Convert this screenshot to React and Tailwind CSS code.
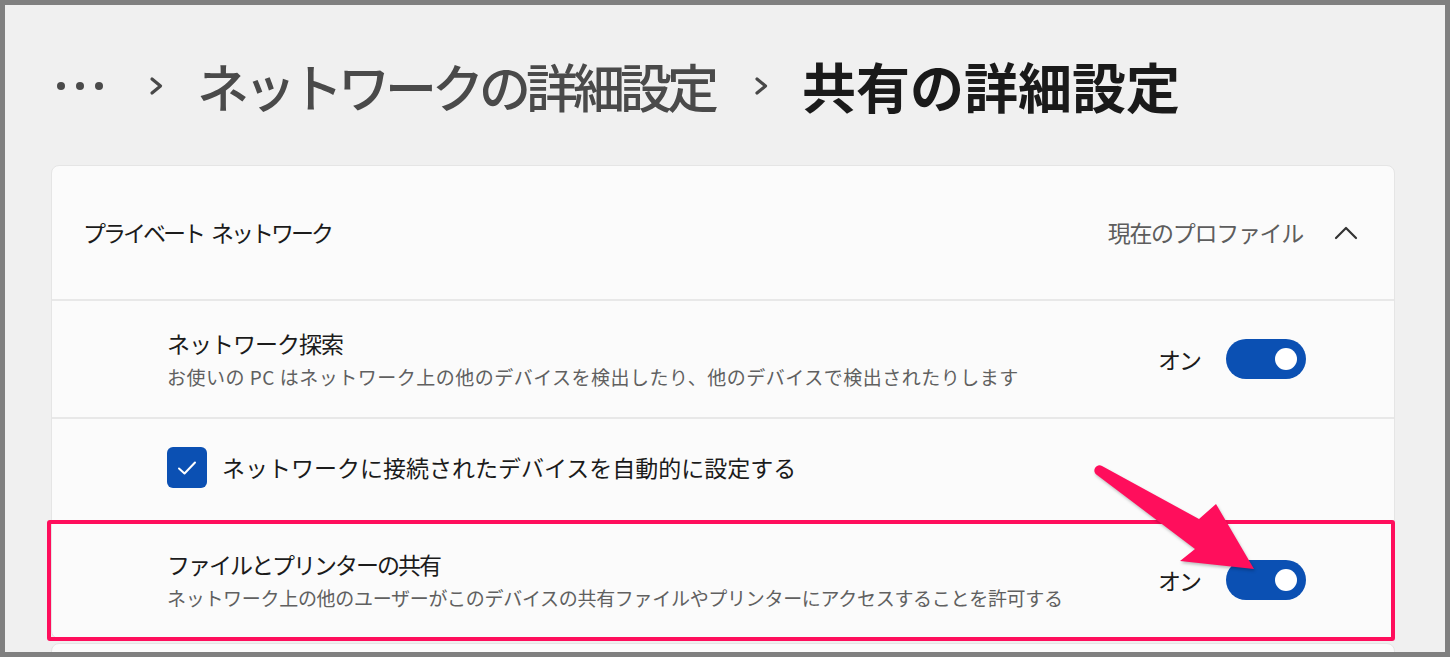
import React from 'react'

function Toggle() {
  return (
    <div className="flex items-center gap-[26px]">
      <span className="text-[23px] tracking-[-2px] text-[#1b1b1b] leading-none">オン</span>
      <div className="w-[80px] h-[40px] rounded-full bg-[#0b50b3] flex items-center justify-end pr-[9px]">
        <div className="w-[22px] h-[22px] rounded-full bg-white" />
      </div>
    </div>
  )
}

function Chevron({ className }) {
  return (
    <svg className={className} viewBox="0 0 14 20" fill="none" stroke="#484848" strokeWidth="3.2" strokeLinecap="round" strokeLinejoin="round">
      <path d="M3 3 L11.5 10 L3 17" />
    </svg>
  )
}

export default function App() {
  return (
    <div className="relative w-[1450px] h-[657px] overflow-hidden border-[5px] border-[#808080] bg-[#f0f0f0] font-['Noto_Sans_CJK_JP',sans-serif]">
      {/* breadcrumb */}
      <div className="flex items-center h-[80px] mt-[41px] pl-[52px]">
        <div className="flex items-center gap-[11px]">
          <div className="w-[8px] h-[8px] rounded-full bg-[#4a4a4a]" />
          <div className="w-[8px] h-[8px] rounded-full bg-[#4a4a4a]" />
          <div className="w-[8px] h-[8px] rounded-full bg-[#4a4a4a]" />
        </div>
        <Chevron className="w-[14px] h-[20px] ml-[46px]" />
        <span className="ml-[34px] text-[52px] font-medium tracking-[-5px] text-[#4a4a4a] leading-none">ネットワークの詳細設定</span>
        <Chevron className="w-[14px] h-[20px] ml-[40px]" />
        <span className="ml-[34px] text-[54px] font-bold text-[#1a1a1a] leading-none">共有の詳細設定</span>
      </div>

      {/* card */}
      <div className="ml-[46px] mt-[39px] w-[1344px] rounded-[8px] border border-[#e5e5e5] bg-[#fbfbfb]">
        <div className="flex items-center justify-between h-[133px] pl-[31px] pr-[36px]">
          <div className="flex items-center gap-[8px] text-[23px] tracking-[-3px] text-[#1b1b1b]">
            <span>プライベート</span>
            <span>ネットワーク</span>
          </div>
          <div className="flex items-center gap-[31px]">
            <span className="text-[23px] tracking-[-1.3px] text-[#5d5d5d]">現在のプロファイル</span>
            <svg className="w-[24px] h-[14px]" viewBox="0 0 24 14" fill="none" stroke="#333" strokeWidth="2.2" strokeLinecap="round" strokeLinejoin="round">
              <path d="M2 12 L12 2 L22 12" />
            </svg>
          </div>
        </div>
        <div className="h-[2px] bg-[#e8e8e8]" />

        <div className="flex items-center justify-between h-[116px] pl-[115px] pr-[88px]">
          <div className="flex flex-col gap-[6px]">
            <span className="text-[23px] tracking-[-1px] text-[#1b1b1b] leading-[30px]">ネットワーク探索</span>
            <span className="text-[19px] tracking-[0.5px] text-[#606060] leading-[26px]">お使いの PC はネットワーク上の他のデバイスを検出したり、他のデバイスで検出されたりします</span>
          </div>
          <Toggle />
        </div>
        <div className="h-[2px] bg-[#e8e8e8]" />

        <div className="flex items-center h-[101px] pl-[115px] pb-[4px] gap-[15px]">
          <div className="w-[40px] h-[41px] rounded-[6px] bg-[#0b50b3] flex items-center justify-center">
            <svg className="w-[20px] h-[16px]" viewBox="0 0 20 16" fill="none" stroke="#fff" strokeWidth="2" strokeLinecap="round" strokeLinejoin="round">
              <path d="M2 8.5 L7.5 13.5 L18 2.5" />
            </svg>
          </div>
          <span className="text-[23px] tracking-[0px] text-[#1b1b1b]">ネットワークに接続されたデバイスを自動的に設定する</span>
        </div>
        <div className="h-[2px] bg-[#e8e8e8]" />

        <div className="flex items-center justify-between h-[116px] pl-[115px] pr-[88px]">
          <div className="flex flex-col gap-[6px]">
            <span className="text-[23px] tracking-[-2px] text-[#1b1b1b] leading-[30px]">ファイルとプリンターの共有</span>
            <span className="text-[19px] tracking-[-0.3px] text-[#606060] leading-[26px]">ネットワーク上の他のユーザーがこのデバイスの共有ファイルやプリンターにアクセスすることを許可する</span>
          </div>
          <Toggle />
        </div>
      </div>

      {/* next card edge */}
      <div className="ml-[46px] mt-[4px] w-[1344px] h-[40px] rounded-[8px] border border-[#e5e5e5] bg-[#fbfbfb]" />

      {/* highlight annotation */}
      <div className="absolute left-[42px] top-[515px] w-[1348px] h-[121px] border-4 border-[#ff0e5c] rounded-[3px]" />
      <svg className="absolute left-[-5px] top-[-5px] w-[1450px] h-[657px] pointer-events-none" viewBox="0 0 1450 657">
        <path
          d="M1102,466 L1199,519 L1216,504 L1254,569 L1180,561 L1195,549 L1097,475 A5,5 0 0 1 1102,466 Z"
          fill="#ff0e5c"
          style={{ filter: 'drop-shadow(1px 2px 1.5px rgba(0,0,0,0.25))' }}
        />
      </svg>
    </div>
  )
}
